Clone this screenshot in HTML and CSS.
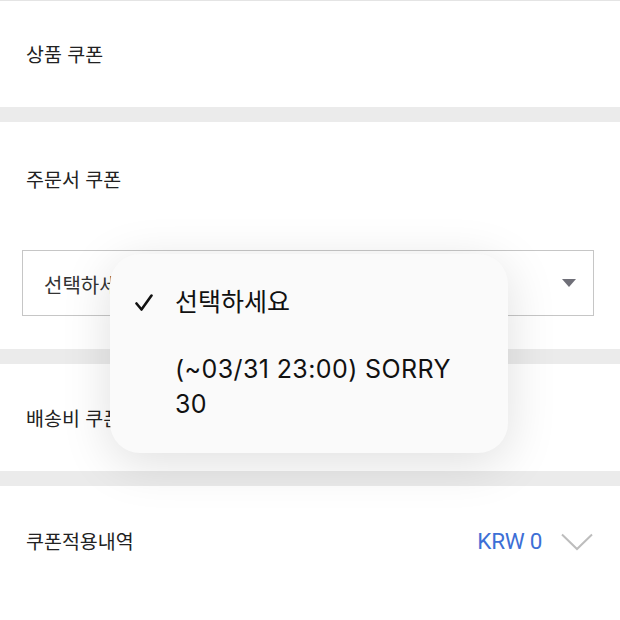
FILE: index.html
```html
<!DOCTYPE html>
<html lang="ko">
<head>
<meta charset="utf-8">
<link rel="stylesheet" href="styles.css">
</head>
<body>
<div class="page">
  <section class="sec sec-simple">
    <div class="label">상품 쿠폰</div>
  </section>
  <div class="band"></div>
  <section class="sec sec-order">
    <div class="label">주문서 쿠폰</div>
    <div class="select">
      <span class="select-text">선택하세요</span>
      <svg class="select-arrow" width="14" height="8" viewBox="0 0 14 8"><path d="M0 0 H14 L7 8 Z" fill="#6f6f78"/></svg>
    </div>
  </section>
  <div class="band"></div>
  <section class="sec sec-simple">
    <div class="label">배송비 쿠폰</div>
  </section>
  <div class="band"></div>
  <section class="sec sec-summary">
    <div class="label">쿠폰적용내역</div>
    <div class="summary-right">
      <span class="amount">KRW 0</span>
      <svg class="chev" width="32" height="18" viewBox="0 0 32 18"><path d="M1 1.5 L16 16 L31 1.5" fill="none" stroke="#bdbdbd" stroke-width="2"/></svg>
    </div>
  </section>

  <div class="popup">
    <div class="opt">
      <span class="opt-check"><svg width="18" height="18" viewBox="0 0 18 18"><path d="M1.5 9.5 L6.5 15.5 L16.5 1.5" fill="none" stroke="#111" stroke-width="2.6" stroke-linecap="round" stroke-linejoin="round"/></svg></span>
      <span class="opt-text">선택하세요</span>
    </div>
    <div class="opt">
      <span class="opt-check"></span>
      <span class="opt-text opt-latin">(~03/31 23:00) SORRY 30</span>
    </div>
  </div>
</div>
</body>
</html>
```

FILE: styles.css
```css
html, body {
  margin: 0;
  padding: 0;
  background: #ffffff;
}
body {
  font-family: "Noto Sans CJK KR", "Noto Sans", sans-serif;
  color: #222222;
}
.page {
  position: relative;
  width: 620px;
  border-top: 1px solid #e4e4e4;
}
.sec {
  background: #ffffff;
  padding: 0 26px 0 26px;
}
.label {
  font-size: 19.5px;
  line-height: 24px;
  color: #222222;
}
.sec-simple {
  height: 106px;
  display: flex;
  align-items: center;
}
.band {
  height: 15px;
  background: #ebebeb;
}
.sec-order {
  padding: 45px 26px 33px 22px;
}
.sec-order .label {
  padding-left: 4px;
}
.select {
  margin-top: 59px;
  height: 64px;
  border: 1px solid #c6c6c6;
  display: flex;
  align-items: center;
  justify-content: space-between;
  padding: 0 17px 0 21px;
}
.select-text {
  font-size: 20px;
  color: #333333;
  margin-top: 2px;
}
.sec-order + .band + .sec-simple {
  height: 107px;
}
.sec-summary {
  height: 110px;
  display: flex;
  align-items: center;
  justify-content: space-between;
  padding-right: 27px;
}
.summary-right {
  display: flex;
  align-items: center;
  gap: 19px;
}
.amount {
  font-family: "Roboto", sans-serif;
  font-size: 22.5px;
  color: #3d6fd6;
  letter-spacing: -0.3px;
}
.chev {
  display: block;
  margin-top: 2px;
}
.popup {
  position: absolute;
  left: 110px;
  top: 253px;
  width: 398px;
  height: 199px;
  box-sizing: border-box;
  padding: 31px 30px 0 25px;
  background: #fafafa;
  border-radius: 30px;
  box-shadow: 0 10px 50px rgba(0, 0, 0, 0.13);
  display: flex;
  flex-direction: column;
  gap: 31px;
}
.opt {
  display: flex;
  align-items: flex-start;
}
.opt-check {
  width: 40px;
  flex: none;
  height: 36px;
  display: flex;
  align-items: center;
}
.opt-check svg {
  display: block;
}
.opt-text {
  font-family: "Inter", "Noto Sans CJK KR", sans-serif;
  font-size: 25px;
  line-height: 35px;
  color: #111111;
  width: 295px;
}
.opt-latin {
  letter-spacing: 0.4px;
}
```
